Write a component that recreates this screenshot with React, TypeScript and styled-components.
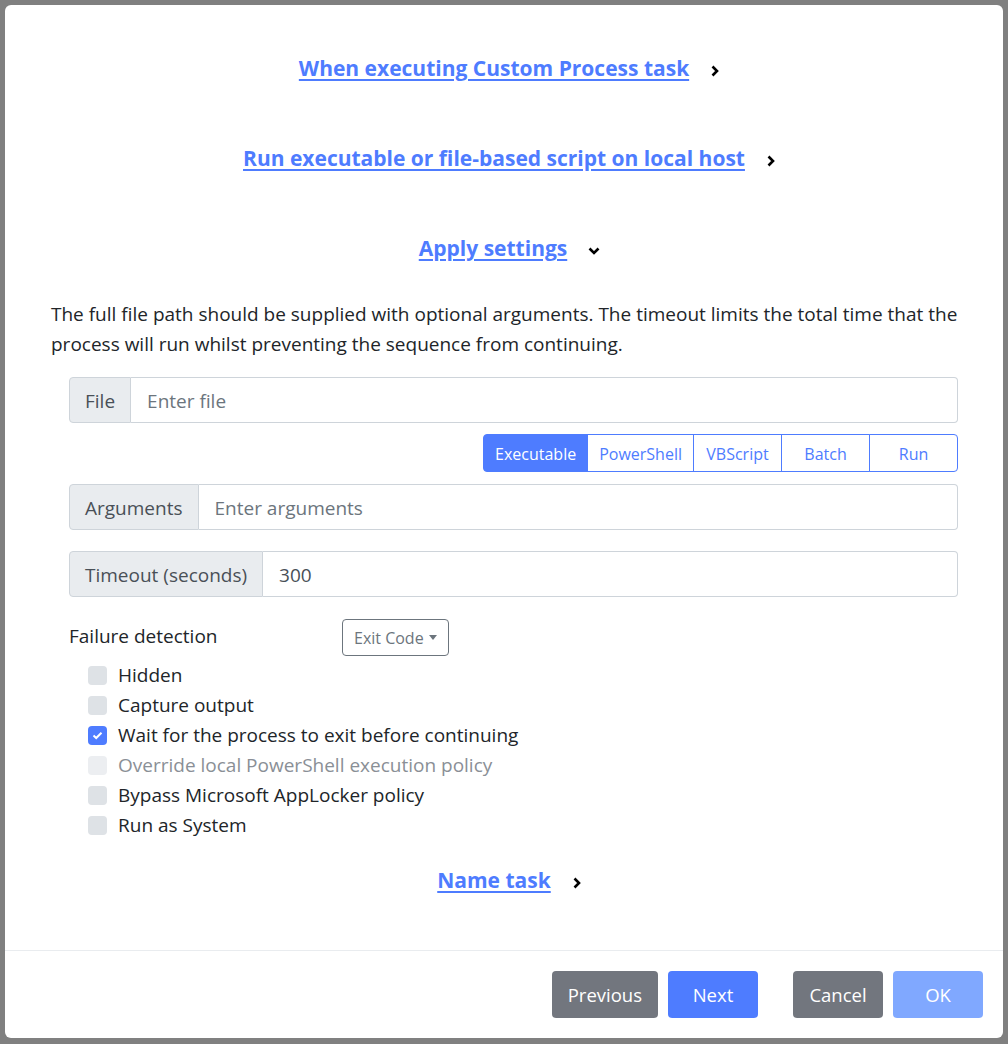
import React from 'react';
import styled, { createGlobalStyle } from 'styled-components';

const GlobalStyle = createGlobalStyle`
  html, body {
    margin: 0;
    padding: 0;
    background: #808080;
    font-family: "Open Sans", "Noto Sans", sans-serif;
    color: #212529;
  }
  * { box-sizing: border-box; }
`;

const Backdrop = styled.div`
  padding: 5px;
  height: 1044px;
`;

const Modal = styled.div`
  display: flex;
  flex-direction: column;
  height: 1033px;
  width: 998px;
  background: #ffffff;
  border-radius: 6px;
  overflow: hidden;
`;

const Body = styled.div`
  flex: 1;
  display: flex;
  flex-direction: column;
  padding: 18px 45px 0 46px;
`;

const SectionHeader = styled.div<{ top?: number; bottom?: number }>`
  display: flex;
  justify-content: center;
  align-items: center;
  gap: 21px;
  height: 30px;
  padding-left: 10px;
  margin-top: ${({ top }) => top ?? 30}px;
  margin-bottom: ${({ bottom }) => bottom ?? 30}px;
  svg {
    margin-top: 6px;
  }
`;

const HeaderLink = styled.a`
  color: #4e7cff;
  font-size: 21px;
  font-weight: 700;
  text-decoration: underline;
  text-underline-offset: 3px;
  cursor: pointer;
`;

const Intro = styled.p`
  margin: 6px 0 0;
  font-size: 19px;
  line-height: 30px;
`;

const Form = styled.div`
  display: flex;
  flex-direction: column;
  margin: 18px 0 0 18px;
`;

const InputGroup = styled.div<{ top?: number }>`
  display: flex;
  height: 46px;
  margin-top: ${({ top }) => top ?? 0}px;
  font-size: 19px;
`;

const Addon = styled.span`
  display: flex;
  align-items: center;
  padding: 2px 15px 0;
  background: #e9ecef;
  border: 1px solid #ced4da;
  border-radius: 4px 0 0 4px;
  color: #495057;
`;

const Input = styled.input`
  flex: 1;
  min-width: 0;
  border: 1px solid #ced4da;
  border-left: none;
  border-radius: 0 4px 4px 0;
  padding: 2px 16px 0;
  font: inherit;
  color: #495057;
  outline: none;
  &::placeholder {
    color: #6c757d;
  }
`;

const TypeGroup = styled.div`
  display: flex;
  align-self: flex-end;
  margin-top: 11px;
  height: 38px;
`;

const TypeButton = styled.button<{ active?: boolean }>`
  min-width: 89px;
  padding: 1px 11px 0;
  font: inherit;
  font-size: 16px;
  color: ${({ active }) => (active ? '#ffffff' : '#4e7cff')};
  background: ${({ active }) => (active ? '#4e7cff' : '#ffffff')};
  border: 1px solid #4e7cff;
  margin-left: -1px;
  &:first-child {
    margin-left: 0;
    border-radius: 4px 0 0 4px;
  }
  &:last-child {
    border-radius: 0 4px 4px 0;
  }
`;

const FailureRow = styled.div`
  display: flex;
  align-items: center;
  margin-top: 22px;
  font-size: 19px;
`;

const FailureLabel = styled.span`
  width: 273px;
  margin-top: -4px;
`;

const DropdownButton = styled.button`
  display: flex;
  align-items: center;
  gap: 5px;
  height: 37px;
  padding: 0 11px;
  font: inherit;
  font-size: 16px;
  color: #6c757d;
  background: #ffffff;
  border: 1px solid #6c757d;
  border-radius: 4px;
`;

const Caret = styled.span`
  width: 0;
  height: 0;
  border-style: solid;
  border-width: 5px 4.5px 0;
  border-color: #6c757d transparent transparent;
`;

const Checks = styled.div`
  display: flex;
  flex-direction: column;
  margin: 4px 0 0 19px;
`;

const CheckRow = styled.label<{ disabled?: boolean }>`
  display: flex;
  align-items: center;
  gap: 11px;
  height: 30px;
  font-size: 19px;
  color: ${({ disabled }) => (disabled ? '#8a8f96' : '#212529')};
`;

const Box = styled.span<{ checked?: boolean; disabled?: boolean }>`
  display: flex;
  align-items: center;
  justify-content: center;
  width: 19px;
  height: 19px;
  border-radius: 4px;
  background: ${({ checked, disabled }) =>
    checked ? '#4e7cff' : disabled ? '#eceef1' : '#dee2e6'};
`;

const Footer = styled.div`
  display: flex;
  justify-content: flex-end;
  gap: 10px;
  padding: 20px 20px;
  border-top: 1px solid #e9ecef;
`;

const FooterButton = styled.button<{ variant: 'primary' | 'secondary' | 'disabled'; gapLeft?: number }>`
  height: 47px;
  padding: 0 16px;
  min-width: 90px;
  font: inherit;
  font-size: 18.5px;
  color: #ffffff;
  border: none;
  border-radius: 4px;
  margin-left: ${({ gapLeft }) => gapLeft ?? 0}px;
  background: ${({ variant }) =>
    variant === 'primary' ? '#4e7cff' : variant === 'secondary' ? '#72767e' : '#80a8ff'};
`;

const ChevronRight = () => (
  <svg width="10" height="12" viewBox="0 0 10 12">
    <path d="M2.5 1.5 L7 6 L2.5 10.5" fill="none" stroke="#000" strokeWidth="2.6" />
  </svg>
);

const ChevronDown = () => (
  <svg width="12" height="10" viewBox="0 0 12 10">
    <path d="M1.5 2.5 L6 7 L10.5 2.5" fill="none" stroke="#000" strokeWidth="2.6" />
  </svg>
);

const CheckMark = () => (
  <svg width="11" height="9" viewBox="0 0 11 9">
    <path d="M1.5 4.5 L4.2 7 L9.5 1.8" fill="none" stroke="#fff" strokeWidth="2" />
  </svg>
);

const options = [
  { label: 'Hidden' },
  { label: 'Capture output' },
  { label: 'Wait for the process to exit before continuing', checked: true },
  { label: 'Override local PowerShell execution policy', disabled: true },
  { label: 'Bypass Microsoft AppLocker policy' },
  { label: 'Run as System' },
];

const types = ['Executable', 'PowerShell', 'VBScript', 'Batch', 'Run'];

export default function App() {
  return (
    <Backdrop>
      <GlobalStyle />
      <Modal>
        <Body>
          <SectionHeader>
            <HeaderLink>When executing Custom Process task</HeaderLink>
            <ChevronRight />
          </SectionHeader>
          <SectionHeader>
            <HeaderLink>Run executable or file-based script on local host</HeaderLink>
            <ChevronRight />
          </SectionHeader>
          <SectionHeader>
            <HeaderLink>Apply settings</HeaderLink>
            <ChevronDown />
          </SectionHeader>
          <Intro>
            The full file path should be supplied with optional arguments. The timeout limits the total time that
            the process will run whilst preventing the sequence from continuing.
          </Intro>
          <Form>
            <InputGroup>
              <Addon>File</Addon>
              <Input placeholder="Enter file" />
            </InputGroup>
            <TypeGroup>
              {types.map((t, i) => (
                <TypeButton key={t} active={i === 0}>
                  {t}
                </TypeButton>
              ))}
            </TypeGroup>
            <InputGroup top={12}>
              <Addon>Arguments</Addon>
              <Input placeholder="Enter arguments" />
            </InputGroup>
            <InputGroup top={21}>
              <Addon>Timeout (seconds)</Addon>
              <Input defaultValue="300" />
            </InputGroup>
            <FailureRow>
              <FailureLabel>Failure detection</FailureLabel>
              <DropdownButton>
                Exit Code <Caret />
              </DropdownButton>
            </FailureRow>
            <Checks>
              {options.map((o) => (
                <CheckRow key={o.label} disabled={o.disabled}>
                  <Box checked={o.checked} disabled={o.disabled}>
                    {o.checked && <CheckMark />}
                  </Box>
                  {o.label}
                </CheckRow>
              ))}
            </Checks>
          </Form>
          <SectionHeader top={25} bottom={0}>
            <HeaderLink>Name task</HeaderLink>
            <ChevronRight />
          </SectionHeader>
        </Body>
        <Footer>
          <FooterButton variant="secondary">Previous</FooterButton>
          <FooterButton variant="primary">Next</FooterButton>
          <FooterButton variant="secondary" gapLeft={25}>
            Cancel
          </FooterButton>
          <FooterButton variant="disabled">OK</FooterButton>
        </Footer>
      </Modal>
    </Backdrop>
  );
}
